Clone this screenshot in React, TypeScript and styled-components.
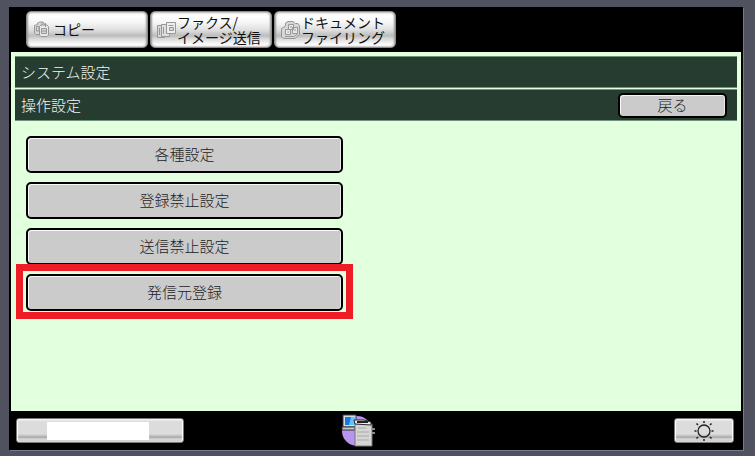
import React from "react";
import styled, { createGlobalStyle, css } from "styled-components";

const GlobalStyle = createGlobalStyle`
  *, *::before, *::after { box-sizing: border-box; }
  body { margin: 0; background: #50525f; }
  button { font: inherit; color: inherit; cursor: pointer; }
`;

const Bezel = styled.div`
  min-height: 100vh;
  display: flex;
  padding: 7px 12px 6px 9px;
  background: #50525f;
  font-family: "Noto Sans CJK JP", sans-serif;
  font-size: 15px;
  font-weight: 300;
  line-height: 20px;
`;

const Screen = styled.div`
  flex: 1;
  min-width: 0;
  display: flex;
  flex-direction: column;
  padding: 0 2px;
  background: #000;
  box-shadow: 1px 1px 0 #777b8c;
`;

const ModeBar = styled.nav`
  display: flex;
  gap: 2px;
  padding: 4px 15px;
`;

const ModeTab = styled.button`
  width: 122px;
  height: 37px;
  display: flex;
  align-items: center;
  padding: 0 0 0 6px;
  border: 1px solid #8a8a8a;
  border-radius: 5px;
  background: linear-gradient(#f0f0f0 0%, #fff 12%, #f6f6f6 30%, #dedede 52%, #bcbcbc 68%, #d8d8d8 76%, #fafafa 92%, #fff 100%);
  box-shadow: inset 1px 0 2px #999, inset -1px 0 2px #999;
  color: #111;
`;

const ModeLabel = styled.span`
  display: flex;
  flex-direction: column;
  font-size: 14px;
  font-weight: 400;
  line-height: 15px;
  text-align: left;
  white-space: nowrap;
`;

const ModeIcon = styled.svg`
  flex: none;
  width: 20px;
  height: 20px;
  fill: #d6d6d6;
  stroke: #989898;
`;

const Panel = styled.main`
  flex: 1;
  display: flex;
  flex-direction: column;
  padding: 4px;
  background: #e2ffde;
`;

const Headings = styled.header`
  display: flex;
  flex-direction: column;
  gap: 1px;
`;

const HeadingBar = styled.div`
  height: 32px;
  display: flex;
  align-items: center;
  justify-content: space-between;
  padding: 0 10px 0 6px;
  border: 1px solid #70917a;
  border-width: 1px 0;
  background: #273c31;
  color: #f1f6ef;
`;

const Title = styled.h1`
  margin: 0;
  font-size: 15px;
  font-weight: 300;
`;

const Subtitle = styled(Title).attrs({ as: "h2" })``;

const keyFace = css`
  border: 2px solid #000;
  border-radius: 5px;
  background: #cbcbcb;
  box-shadow: inset 1px 1px 0 #f8f8f8, inset -1px 0 0 #e8e8e8;
  color: #222;
  padding: 0 0 2px;
`;

const BackButton = styled.button`
  ${keyFace}
  width: 109px;
  height: 25px;
`;

const Menu = styled.ul`
  list-style: none;
  width: 46%;
  min-width: 180px;
  margin: 0;
  padding: 15px 4px 0 11px;
  display: flex;
  flex-direction: column;
  gap: 9px;
`;

const MenuItem = styled.li<{ $marked?: boolean }>`
  position: relative;
  display: flex;
  ${(p) =>
    p.$marked &&
    css`
      &::after {
        content: "";
        position: absolute;
        inset: -10px -10px -8px;
        border: 7px solid #ee1c24;
        pointer-events: none;
      }
    `}
`;

const MenuButton = styled.button`
  ${keyFace}
  flex: 1;
  height: 37px;
`;

const StatusBar = styled.footer`
  height: 39px;
  display: grid;
  grid-template-columns: 10fr auto 11fr;
  align-items: center;
  padding: 0 7px 0 5px;
`;

const StatusKey = styled.button<{ $end?: boolean }>`
  width: ${(p) => (p.$end ? "60px" : "168px")};
  height: 25px;
  display: flex;
  align-items: center;
  justify-content: center;
  justify-self: ${(p) => (p.$end ? "end" : "start")};
  padding: 0;
  border: 1px solid #777;
  border-radius: 3px;
  background: linear-gradient(#f2f2f2 0 4%, #dcdcdc 10% 65%, #aaa 80%, #d6d6d6 86%, #ccc);
  box-shadow: inset 1px 0 1px #fff, inset -1px 0 1px #fff;
`;

const BlankField = styled.span`
  width: 102px;
  height: 18px;
  margin-right: 4px;
  background: #fff;
`;

const DeviceIcon = styled.svg`
  display: block;
  width: 36px;
  height: 34px;
`;

const SunIcon = styled.svg`
  width: 20px;
  height: 20px;
  fill: none;
  stroke: #222;
`;

const CopyIcon = () => (
  <ModeIcon viewBox="0 0 20 20" aria-hidden="true">
    <path d="M4.500 4.500V3L6.500 2H10L11.500 4V13L10 14.500H3L1.500 13V5.500Z" />
    <path d="M6.500 6.500L8 5H14L15.500 6.500V15L14 16.500H8L6.500 15Z" fill="#e8e8e8" />
    <path d="M3.500 6.500H6V11H3.500ZM8.500 8.500H13.500V13.500H8.500ZM9 11H13M9 3V5M12.500 3V7" />
  </ModeIcon>
);

const FaxIcon = () => (
  <ModeIcon viewBox="0 0 20 20" aria-hidden="true">
    <path d="M0.500 5.500H7.500V17.500H0.500Z" />
    <path d="M4.500 4.500H12.500V16.500H4.500Z" fill="#e0e0e0" />
    <path d="M9.500 2.500H18.500V13.500H9.500Z" fill="#eee" />
    <path d="M2.500 8V15M6.500 7V14M11.500 5.500H16.500M12.500 7.500H16.500V10.500H12.500Z" />
  </ModeIcon>
);

const FilingIcon = () => (
  <ModeIcon viewBox="0 0 20 20" aria-hidden="true">
    <path d="M0.500 8.500L4.500 6V3L7 1.500H12L14.500 3.500H17L18.500 6V14.500L14 18.500H3L0.500 17Z" />
    <path d="M7.500 4.500H12.500V9.500H7.500ZM11.500 7.500H16.500V13.500H11.500ZM4.500 9.500H9.500V14.500H4.500Z" fill="#e8e8e8" />
    <path d="M4 16.500H13L16.500 14M6.500 12H8M9 7H11M13 10H15" />
  </ModeIcon>
);

const modes = [
  { lines: ["コピー"], Icon: CopyIcon },
  { lines: ["ファクス/", "イメージ送信"], Icon: FaxIcon },
  { lines: ["ドキュメント", "ファイリング"], Icon: FilingIcon },
];

const menu = [
  { label: "各種設定" },
  { label: "登録禁止設定" },
  { label: "送信禁止設定" },
  { label: "発信元登録", marked: true },
];

export default function App() {
  return (
    <>
      <GlobalStyle />
      <Bezel lang="ja">
        <Screen>
          <ModeBar>
            {modes.map(({ lines, Icon }) => (
              <ModeTab key={lines[0]} type="button">
                <Icon />
                <ModeLabel>
                  {lines.map((line) => (
                    <span key={line}>{line}</span>
                  ))}
                </ModeLabel>
              </ModeTab>
            ))}
          </ModeBar>
          <Panel>
            <Headings>
              <HeadingBar>
                <Title>システム設定</Title>
              </HeadingBar>
              <HeadingBar>
                <Subtitle>操作設定</Subtitle>
                <BackButton type="button">戻る</BackButton>
              </HeadingBar>
            </Headings>
            <Menu>
              {menu.map((item) => (
                <MenuItem key={item.label} $marked={item.marked}>
                  <MenuButton type="button">{item.label}</MenuButton>
                </MenuItem>
              ))}
            </Menu>
          </Panel>
          <StatusBar>
            <StatusKey type="button" aria-label="状態">
              <BlankField />
            </StatusKey>
            <DeviceIcon viewBox="0 0 36 34" aria-hidden="true">
              <circle cx="16" cy="17" r="15" fill="#b994ee" />
              <path d="M2 1H15V13H2Z" fill="#d8dce0" stroke="#34404c" />
              <path d="M4 3H14V11H4Z" fill="#1478ea" />
              <path d="M10 3H14V11L8 11Z" fill="#5cc8ff" />
              <path d="M1 13H14V16H1Z" fill="#c6c9cc" stroke="#303038" />
              <path d="M14 9L31 10V32H14Z" fill="#d5d5d3" stroke="#77777b" />
              <path d="M13 6H23L30 8V11L14 10Z" fill="#f0f0ee" stroke="#25252b" />
              <path d="M16 8H27" stroke="#222" strokeWidth="2" />
              <path d="M16 18H28M16 22H28M16 26H28M17 14H25" stroke="#aaa" />
              <path d="M31 15H34M31 19H34" stroke="#88888e" strokeWidth="2" />
            </DeviceIcon>
            <StatusKey type="button" $end aria-label="明るさ">
              <SunIcon viewBox="0 0 20 20" aria-hidden="true">
                <circle cx="10" cy="10" r="6" strokeWidth="1.300" />
                <path d="M10 0V2M10 18V20M0.500 10H2.500M17.500 10H19.500M2.500 2.500L4 4M16 4L17.500 2.500M2.500 17.500L4 16M16 16L17.500 17.500" strokeWidth="1.500" />
              </SunIcon>
            </StatusKey>
          </StatusBar>
        </Screen>
      </Bezel>
    </>
  );
}
